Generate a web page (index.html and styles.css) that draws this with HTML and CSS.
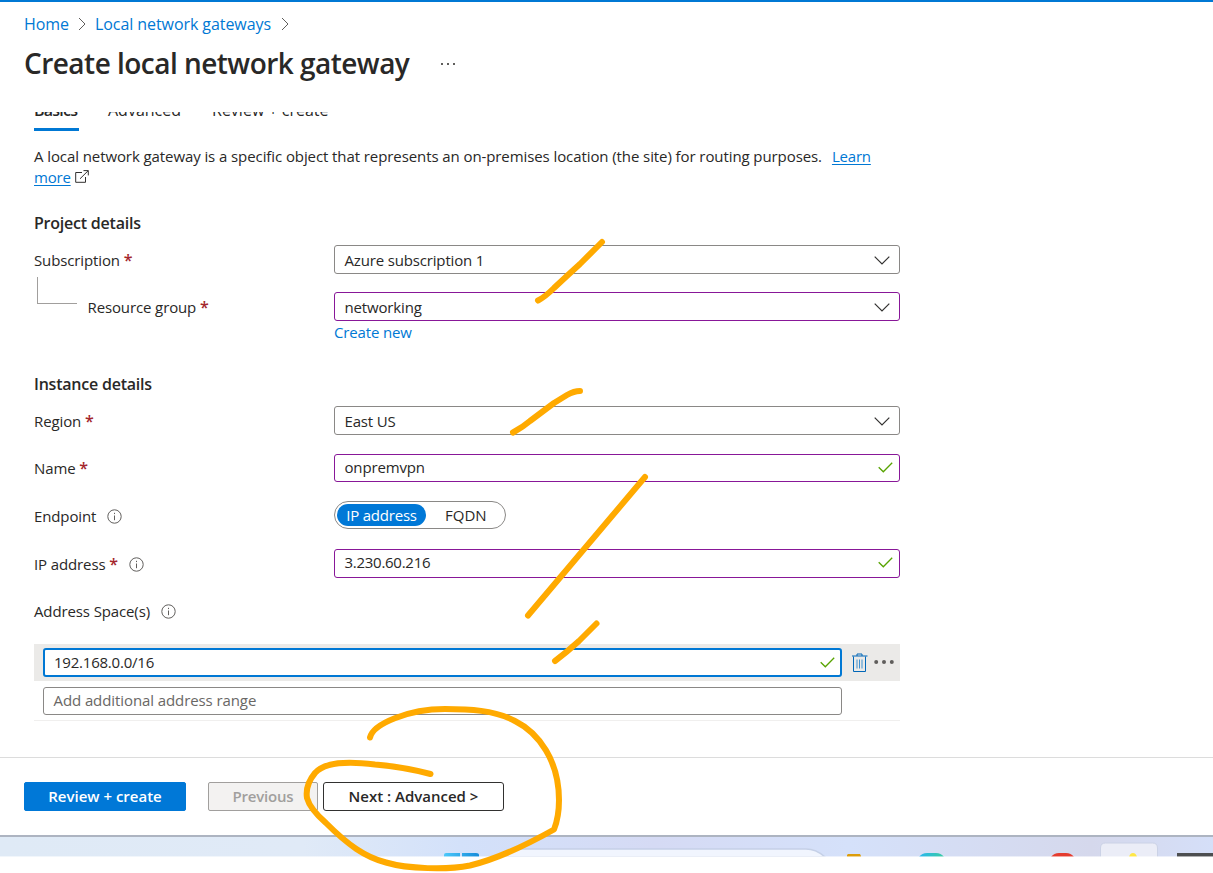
FILE: index.html
```html
<!DOCTYPE html>
<html lang="en">
<head>
<meta charset="utf-8">
<title>Create local network gateway</title>
<link rel="stylesheet" href="styles.css">
</head>
<body>
<svg class="defs" width="0" height="0">
  <symbol id="chev" viewBox="0 0 16 9"><path d="M.7.7 8 8 15.3.7"/></symbol>
  <symbol id="crumb" viewBox="0 0 8 14"><path d="M1 1l6 6-6 6"/></symbol>
  <symbol id="check" viewBox="0 0 15 11"><path d="M.7 5.2 5.3 9.8 14.2.8"/></symbol>
  <symbol id="info" viewBox="0 0 15 15"><circle cx="7.5" cy="7.5" r="6.7"/><path d="M7.5 6.5v4.7M7.5 3.8v1.3"/></symbol>
</svg>
<div class="page">
  <header class="header">
    <nav class="crumbs">
      <a class="c-home">Home</a><svg class="crumb-icon"><use href="#crumb"/></svg><a class="c-list">Local network gateways</a><svg class="crumb-icon"><use href="#crumb"/></svg>
    </nav>
    <div class="title-row"><h1>Create local network gateway</h1><svg class="title-more" viewBox="0 0 14 2"><path d="M0 0h2v2H0zM6 0h2v2H6zM12 0h2v2h-2z"/></svg></div>
  </header>

  <main class="content">
    <div class="tabs"><div class="tab active">Basics</div><div class="tab adv">Advanced</div><div class="tab rev">Review + create</div></div>
    <p class="intro"><span class="intro-text">A local network gateway is a specific object that represents an on-premises location (the site) for routing purposes.</span><a class="learn">Learn</a><br><a>more</a><svg class="external" viewBox="0 0 14 13"><path d="M7 2.5H.7v9.8h9.8V7M8.5.6h4.8v4.8M13.2.7 5 8.8"/></svg></p>

    <h2 class="project">Project details</h2>
    <div class="row subscription"><label>Subscription <b>*</b></label><div class="field">Azure subscription 1<svg class="chev"><use href="#chev"/></svg></div></div>
    <div class="row group"><label><span class="branch"></span>Resource group <b>*</b></label><div class="field changed">networking<svg class="chev"><use href="#chev"/></svg></div></div>
    <a class="create-new">Create new</a>

    <h2 class="instance">Instance details</h2>
    <div class="row region"><label>Region <b>*</b></label><div class="field">East US<svg class="chev"><use href="#chev"/></svg></div></div>
    <div class="row name"><label>Name <b>*</b></label><div class="field changed">onpremvpn<svg class="check"><use href="#check"/></svg></div></div>
    <div class="row endpoint"><label>Endpoint<svg class="info"><use href="#info"/></svg></label><div class="toggle"><span class="on">IP address</span><span class="off">FQDN</span></div></div>
    <div class="row ip"><label>IP address <b>*</b><svg class="info"><use href="#info"/></svg></label><div class="field changed">3.230.60.216<svg class="check"><use href="#check"/></svg></div></div>
    <div class="row spaces"><label>Address Space(s)<svg class="info"><use href="#info"/></svg></label></div>

    <div class="ranges">
      <div class="range selected">
        <div class="field focused">192.168.0.0/16<svg class="check"><use href="#check"/></svg></div>
        <svg class="trash" viewBox="0 0 16 20"><path d="M1.5 3.5v15h12v-15M0 3h15.5M5 3V1h5v2"/><path class="bars" d="M5 6.5v9M7.5 6.5v9M10 6.5v9"/></svg>
        <svg class="row-more" viewBox="0 0 20 4"><circle cx="2.2" cy="2" r="2"/><circle cx="10" cy="2" r="2"/><circle cx="17.8" cy="2" r="2"/></svg>
      </div>
      <div class="range blank"><div class="field placeholder">Add additional address range</div></div>
    </div>
  </main>

  <footer class="footer">
    <button class="btn primary">Review + create</button>
    <button class="btn disabled">Previous</button>
    <button class="btn next">Next : Advanced &gt;</button>
  </footer>

  <svg class="taskbar" viewBox="0 835 1213 22" preserveAspectRatio="none">
    <defs>
      <linearGradient id="sky"><stop offset="0" stop-color="#dfeaf6"/><stop offset=".25" stop-color="#e0eaf7"/><stop offset=".38" stop-color="#d3e1fa"/><stop offset=".54" stop-color="#d5daf4"/><stop offset=".7" stop-color="#d5e1fa"/><stop offset=".9" stop-color="#d5d8ec"/><stop offset="1" stop-color="#d5dff8"/></linearGradient>
      <linearGradient id="win"><stop offset="0" stop-color="#4bc8fa"/><stop offset="1" stop-color="#168bd9"/></linearGradient>
      <linearGradient id="edge"><stop offset="0" stop-color="#2bb7ee"/><stop offset="1" stop-color="#38cba4"/></linearGradient>
    </defs>
    <rect y="835" width="1213" height="22" fill="url(#sky)"/>
    <path d="M500 857q9-8 20-8h286q10 0 19 8z" fill="#f1f5fe" stroke="#c5d0e7" stroke-width="1.5"/>
    <path d="M444 857v-2q0-2 2-2h14v4zM462 857v-4h14q3 0 3 2v2z" fill="url(#win)"/>
    <path d="M847 857v-2l1-1h12l1 2v1z" fill="#dc9c0b"/>
    <path d="M919 857q3-4 8-4h9q5 0 8 4z" fill="url(#edge)"/>
    <path d="M1051 857q3-4 8-4h7q5 0 8 4z" fill="#e43c2f"/>
    <path d="M1100.5 857v-9q0-5 5-5h47q5 0 5 5v9" fill="#ebedf7" stroke="#cbd2e6"/>
    <path d="M1129 857q1-4 4-4t4 4z" fill="#fee746"/>
    <rect x="1177" y="853" width="36" height="4" fill="#4c4e50"/>
    <rect y="856" width="1213" height="1" fill="#fff" opacity=".55"/>
    <rect y="835" width="1213" height="2" fill="#adb4c1"/>
  </svg>

  <svg class="ink" viewBox="0 0 1213 873">
    <path d="M602 242 580 264Q569 274 554 288 545 297 538 300.500"/>
    <path d="M580 391Q574 391 567 395L554 403 530 421Q523 427 513 432.500"/>
    <path d="M645 477 528 615.500"/>
    <path d="M596.500 623.500 579 641Q567 652 555 661"/>
    <path d="M430.500 774Q404 767 375 764.500C346 761 325 762 315 773Q305 785 307 798Q310 809 326 823C348 845 365 857 386 862.500C408 869 447 870 470 865.500C501 858 530 843 554 829.500Q559 817 559 800C559 761 539 733 515 721C495 710 468 709 445 709C408 709 373 724 370 737.500"/>
  </svg>
</div>
</body>
</html>
```
FILE: styles.css
```css
* { box-sizing: border-box; }
body { margin: 0; background: #fff; font: 15px/21px "Open Sans", "Noto Sans", sans-serif; color: #292827; }
svg { flex: none; fill: none; stroke: #323130; }
a { color: #0078d4; }
h1, h2, p { margin: 0; }
.defs { position: absolute; }
.page { position: relative; width: 1213px; height: 873px; overflow: hidden; display: flex; flex-direction: column; border-top: 2px solid #0078d4; }

.header { height: 110px; padding: 11px 24px 0; flex: none; }
.crumbs { display: flex; align-items: center; height: 22px; font-size: 16px; }
.c-home { width: 45px; letter-spacing: -.05px; white-space: nowrap; }
.c-list { width: 177px; letter-spacing: -.07px; white-space: nowrap; }
.crumb-icon { width: 8px; height: 14px; margin: 0 9px; stroke: #605e5c; }
.title-row { display: flex; align-items: center; height: 42px; margin-top: 7px; }
h1 { width: 386px; font-size: 28px; line-height: 40px; font-weight: 600; letter-spacing: -.53px; white-space: nowrap; }
.title-more { width: 14px; height: 2px; margin: 2px 0 0 31px; fill: #605e5c; stroke: none; }

.content { width: 900px; height: 645px; padding-left: 34px; overflow: hidden; flex: none; }
.tabs { display: flex; height: 19px; overflow: hidden; }
.tab { height: 32px; margin-top: -13px; line-height: 22px; font-size: 16px; white-space: nowrap; border-bottom: 3px solid transparent; }
.active { width: 45px; font-weight: 600; letter-spacing: -.75px; border-color: #0078d4; }
.adv { margin-left: 29px; width: 75px; }
.rev { margin-left: 29px; }
.intro { margin-top: 15px; white-space: nowrap; letter-spacing: -.088px; }
.intro a { letter-spacing: -.2px; text-decoration: underline; text-underline-offset: 2px; }
.intro .learn { margin-left: 10px; }
.external { width: 14px; height: 13px; margin-left: 4px; }
h2 { font-size: 16px; line-height: 24px; font-weight: 600; letter-spacing: -.22px; }
.project { margin-top: 23px; }
.row { display: flex; align-items: center; height: 29px; }
label { width: 300px; display: flex; align-items: center; white-space: pre; padding-top: 2px; letter-spacing: -.12px; }
label b { color: #a4262c; font-weight: 600; font-size: 16px; }
.info { width: 15px; height: 15px; margin-left: 11px; stroke: #605e5c; }
.field { width: 566px; height: 29px; display: flex; align-items: center; justify-content: space-between; border: 1px solid #8a8886; border-radius: 3px; padding: 1px 9.5px 0 9.5px; background: #fff; letter-spacing: -.16px; }
.changed { border-color: #881798; }
.chev { width: 16px; height: 9px; stroke-width: 1.2; }
.check { width: 15px; height: 11px; margin-right: -3px; stroke: #57a300; stroke-width: 1.3; }
.subscription { margin-top: 10px; }
.group { margin-top: 18px; }
.branch { width: 40px; height: 27px; margin: -35px 10.5px 0 3px; border-left: 1px solid #a19f9d; border-bottom: 1px solid #a19f9d; }
.create-new { display: block; margin: 1px 0 0 300px; height: 21px; letter-spacing: -.16px; }
.instance { margin-top: 29px; }
.region { margin-top: 10px; }
.name { margin-top: 19px; height: 28px; }
.name label { padding-top: 1px; }
.name .field { height: 28px; padding-top: 0; padding-bottom: 1px; }
.endpoint { margin-top: 19px; height: 28px; }
.toggle { display: flex; align-items: center; width: 172px; height: 28px; border: 1px solid #8a8886; border-radius: 14px; padding-left: 2px; }
.on { width: 89px; height: 22px; line-height: 23px; border-radius: 11px; background: #0078d7; color: #fff; text-align: center; letter-spacing: -.2px; }
.off { margin-left: 19px; }
.ip { margin-top: 20px; }
.ip .field { padding: 0 9px 2px 9.5px; letter-spacing: -.27px; }
.spaces { margin-top: 18px; }
.ranges { margin-top: 19px; height: 77px; border-bottom: 1px solid #f0efee; }
.range { display: flex; align-items: center; height: 37px; padding-left: 9px; }
.range .field { width: 799px; }
.selected { background: #ebeae8; }
.range .focused { border: 2px solid #0078d4; padding: 0 8px 1px 9px; letter-spacing: -.22px; }
.trash { width: 16px; height: 20px; margin-left: 10px; stroke: #0067b8; }
.bars { stroke: #3f91d0; }
.row-more { width: 20px; height: 4px; margin: -1px 0 0 6px; fill: #605e5c; stroke: none; }
.blank { height: 39px; }
.blank .field { height: 28px; margin-top: 1px; padding-top: 0; padding-bottom: 1px; }
.range .placeholder { color: #696765; letter-spacing: -.09px; }

.footer { height: 78px; border-top: 1px solid #dcdcdc; padding: 24px 24px 0; display: flex; flex: none; align-items: flex-start; }
.btn { height: 29px; font: 600 15px/21px "Open Sans", sans-serif; border: 1px solid #323130; border-radius: 2px; padding: 0; background: #fff; color: #292827; white-space: nowrap; }
.primary { width: 162px; background: #0078d7; border-color: #0078d7; color: #fff; }
.disabled { width: 110px; margin-left: 22px; background: #f3f2f1; border-color: #a19f9d; color: #a19f9d; letter-spacing: -.2px; }
.next { width: 181px; margin-left: 5px; border-radius: 3px; }
.taskbar { width: 1213px; height: 22px; stroke: none; }
.ink { position: absolute; left: 0; top: -2px; width: 1213px; height: 873px; pointer-events: none; stroke: #ffaa00; stroke-width: 6; stroke-linecap: round; stroke-linejoin: round; }
```
